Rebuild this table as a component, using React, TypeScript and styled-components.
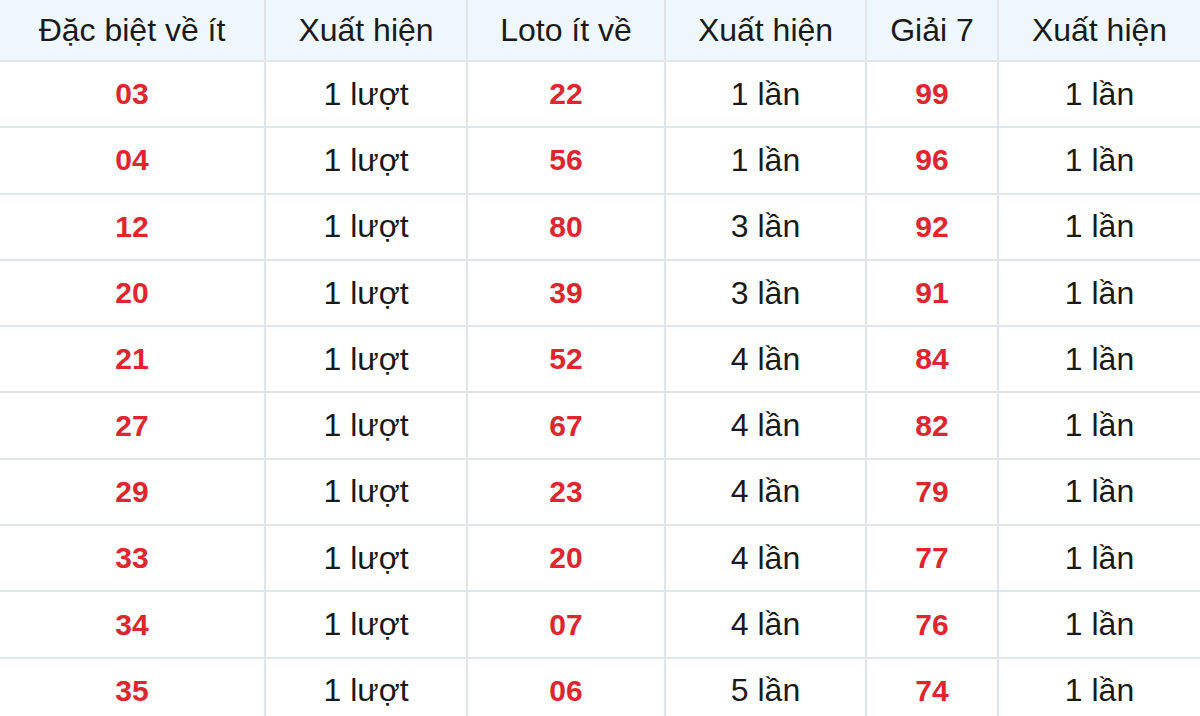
import React from 'react'
import styled, { createGlobalStyle } from 'styled-components'

const GlobalStyle = createGlobalStyle`
	html, body {
		margin: 0;
		padding: 0;
		background: #ffffff;
	}
	body {
		font-family: 'Liberation Sans', Arial, sans-serif;
	}
`

const Table = styled.table`
	width: 1200px;
	table-layout: fixed;
	border-collapse: collapse;
	font-family: 'Liberation Sans', Arial, sans-serif;
	font-size: 32px;
	color: #1a1a1a;
`

const Head = styled.th`
	height: 60px;
	padding: 0;
	font-weight: normal;
	text-align: center;
	background: #eef6fe;
	border: 2px solid #e1e5ea;
	border-top: none;
	&:first-child {
		border-left: none;
	}
	&:last-child {
		border-right: none;
	}
`

const Cell = styled.td<{ $hot?: boolean }>`
	height: 64.3px;
	padding: 0;
	text-align: center;
	border: 2px solid #e1e5ea;
	color: ${(p) => (p.$hot ? '#e0252f' : '#1a1a1a')};
	font-weight: ${(p) => (p.$hot ? 'bold' : 'normal')};
	font-size: ${(p) => (p.$hot ? '30px' : '32px')};
	&:first-child {
		border-left: none;
	}
	&:last-child {
		border-right: none;
	}
`

const columns = [
	{ title: 'Đặc biệt về ít', width: 265 },
	{ title: 'Xuất hiện', width: 202 },
	{ title: 'Loto ít về', width: 198 },
	{ title: 'Xuất hiện', width: 201 },
	{ title: 'Giải 7', width: 132 },
	{ title: 'Xuất hiện', width: 202 },
]

const rows: [string, string, string, string, string, string][] = [
	['03', '1 lượt', '22', '1 lần', '99', '1 lần'],
	['04', '1 lượt', '56', '1 lần', '96', '1 lần'],
	['12', '1 lượt', '80', '3 lần', '92', '1 lần'],
	['20', '1 lượt', '39', '3 lần', '91', '1 lần'],
	['21', '1 lượt', '52', '4 lần', '84', '1 lần'],
	['27', '1 lượt', '67', '4 lần', '82', '1 lần'],
	['29', '1 lượt', '23', '4 lần', '79', '1 lần'],
	['33', '1 lượt', '20', '4 lần', '77', '1 lần'],
	['34', '1 lượt', '07', '4 lần', '76', '1 lần'],
	['35', '1 lượt', '06', '5 lần', '74', '1 lần'],
]

const App = () => {
	return (
		<>
			<GlobalStyle />
			<Table>
				<colgroup>
					{columns.map((c, i) => (
						<col key={i} style={{ width: c.width }} />
					))}
				</colgroup>
				<thead>
					<tr>
						{columns.map((c, i) => (
							<Head key={i}>{c.title}</Head>
						))}
					</tr>
				</thead>
				<tbody>
					{rows.map((r, i) => (
						<tr key={i}>
							{r.map((v, j) => (
								<Cell key={j} $hot={j % 2 === 0}>
									{v}
								</Cell>
							))}
						</tr>
					))}
				</tbody>
			</Table>
		</>
	)
}

export default App
